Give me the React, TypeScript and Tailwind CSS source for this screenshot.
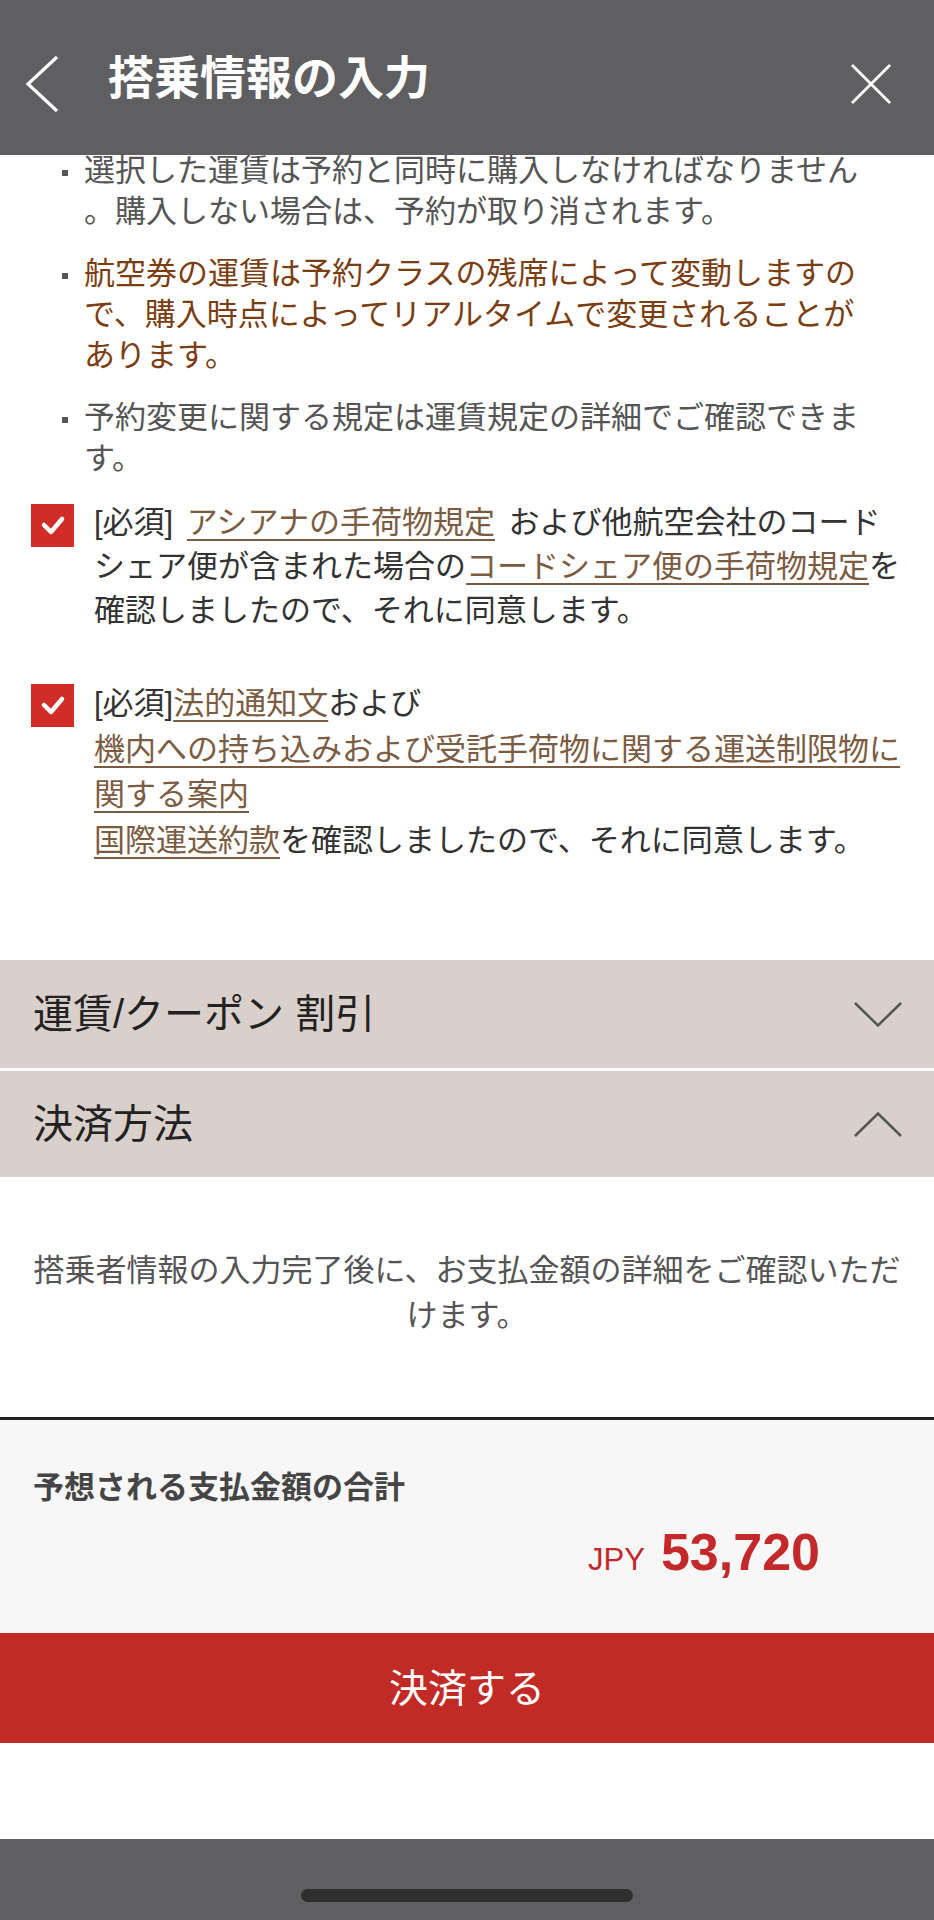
import { useState } from "react";

const notes = [
  {
    text: "選択した運賃は予約と同時に購入しなければなりません。購入しない場合は、予約が取り消されます。",
    tone: "text-[#555555] [line-break:anywhere]",
  },
  {
    text: "航空券の運賃は予約クラスの残席によって変動しますので、購入時点によってリアルタイムで変更されることがあります。",
    tone: "text-[#7b3d12]",
  },
  {
    text: "予約変更に関する規定は運賃規定の詳細でご確認できます。",
    tone: "text-[#555555]",
  },
];

const Link = ({ children, className = "" }: { children: React.ReactNode; className?: string }) => (
  <a
    className={`text-[#7b5c42] underline decoration-[#7b5c42] decoration-2 underline-offset-[6px] cursor-pointer ${className}`}
  >
    {children}
  </a>
);

const CheckBox = ({ checked, onClick }: { checked: boolean; onClick: () => void }) => (
  <button
    onClick={onClick}
    className={`w-[43px] h-[43px] mt-[3px] shrink-0 flex items-center justify-center ${checked ? "bg-[#d12c27]" : "bg-white border-2 border-[#999]"}`}
  >
    {checked && (
      <svg width="43" height="43" viewBox="0 0 43 43" fill="none">
        <polyline points="13,21 20,28 31,15" stroke="#fff" strokeWidth="4.5" strokeLinecap="round" strokeLinejoin="round" />
      </svg>
    )}
  </button>
);

const Chevron = ({ up }: { up?: boolean }) => (
  <svg width="48" height="25" viewBox="0 0 48 25" fill="none">
    <polyline
      points={up ? "1,24 24,1.5 47,24" : "1,1 24,23.5 47,1"}
      stroke="#555"
      strokeWidth="2.5"
    />
  </svg>
);

export default function App() {
  const [agree1, setAgree1] = useState(true);
  const [agree2, setAgree2] = useState(true);
  const [couponOpen, setCouponOpen] = useState(false);
  const [payOpen, setPayOpen] = useState(true);

  return (
    <div className="w-full h-[1920px] flex flex-col bg-white overflow-hidden font-['Liberation_Sans','Noto_Sans_CJK_JP',sans-serif]">
      {/* header */}
      <header className="h-[155px] shrink-0 bg-[#5f5f61] flex relative z-10">
        <svg className="mt-[54px] ml-[24px]" width="38" height="62" viewBox="0 0 38 62" fill="none">
          <polyline points="33,3 4,30 33,57" stroke="#fff" strokeWidth="3.2" />
        </svg>
        <h1 className="self-center ml-[46px] text-[46px] leading-none font-bold text-white">搭乗情報の入力</h1>
        <svg className="ml-auto mr-[43px] mt-[64px]" width="40" height="40" viewBox="0 0 40 40" fill="none">
          <path d="M1 1L39 39M39 1L1 39" stroke="#fff" strokeWidth="2.8" />
        </svg>
      </header>

      {/* notes */}
      <ul className="-mt-[5px] pl-[62px] flex flex-col gap-[21px]">
        {notes.map((n) => (
          <li key={n.text} className="flex items-start">
            <span className="w-[6px] h-[6px] mt-[20px] bg-[#555] shrink-0" />
            <p className={`ml-[16px] w-[790px] text-[31px] leading-[41px] ${n.tone}`}>{n.text}</p>
          </li>
        ))}
      </ul>

      {/* agreements */}
      <div className="mt-[22px] pl-[31px] flex items-start">
        <CheckBox checked={agree1} onClick={() => setAgree1(!agree1)} />
        <p className="ml-[20px] w-[808px] text-[31px] leading-[44px] text-[#333]">
          [必須] <Link className="mx-[5px]">アシアナの手荷物規定</Link> および他航空会社のコードシェア便が含まれた場合の
          <Link>コードシェア便の手荷物規定</Link>を確認しましたので、それに同意します。
        </p>
      </div>
      <div className="mt-[48px] pl-[31px] flex items-start">
        <CheckBox checked={agree2} onClick={() => setAgree2(!agree2)} />
        <p className="ml-[20px] w-[808px] text-[31px] leading-[45.5px] text-[#333]">
          [必須]<Link>法的通知文</Link>および
          <br />
          <Link>機内への持ち込みおよび受託手荷物に関する運送制限物に関する案内</Link>
          <br />
          <Link>国際運送約款</Link>を確認しましたので、それに同意します。
        </p>
      </div>

      {/* accordions */}
      <div className="mt-[97px] flex flex-col gap-[3px]">
        <button
          onClick={() => setCouponOpen(!couponOpen)}
          className="h-[108px] bg-[#d9d0cb] flex items-center justify-between pl-[33px] pr-[32px]"
        >
          <span className="text-[40px] leading-none text-[#222]">運賃/クーポン 割引</span>
          <Chevron up={couponOpen} />
        </button>
        <button
          onClick={() => setPayOpen(!payOpen)}
          className="h-[106px] bg-[#d9d0cb] flex items-center justify-between pl-[33px] pr-[32px]"
        >
          <span className="text-[40px] leading-none text-[#222]">決済方法</span>
          <Chevron up={payOpen} />
        </button>
      </div>

      {payOpen && (
        <p className="pt-[71px] pb-[79px] px-[31px] text-center text-[31px] leading-[45px] text-[#555]">
          搭乗者情報の入力完了後に、お支払金額の詳細をご確認いただけます。
        </p>
      )}

      {/* total */}
      <div className="h-[3px] bg-[#222] shrink-0" />
      <div className="h-[213px] shrink-0 bg-[#f7f7f7] pt-[48px] px-[33px] flex flex-col">
        <p className="text-[31px] leading-[40px] font-bold text-[#454545]">予想される支払金額の合計</p>
        <div className="mt-[18px] pr-[81px] flex items-baseline justify-end text-[#c3292a]">
          <span className="text-[31px] leading-none mr-[16px]">JPY</span>
          <span className="text-[52px] leading-none font-bold">53,720</span>
        </div>
      </div>
      <button className="h-[110px] shrink-0 bg-[#c22a25] text-white text-[39px] leading-none">決済する</button>

      <div className="flex-1 bg-white" />

      {/* home indicator */}
      <div className="h-[81px] shrink-0 bg-[#5f5f61] flex justify-center pt-[50px]">
        <div className="w-[332px] h-[13px] rounded-full bg-[#2f2f2f]" />
      </div>
    </div>
  );
}
